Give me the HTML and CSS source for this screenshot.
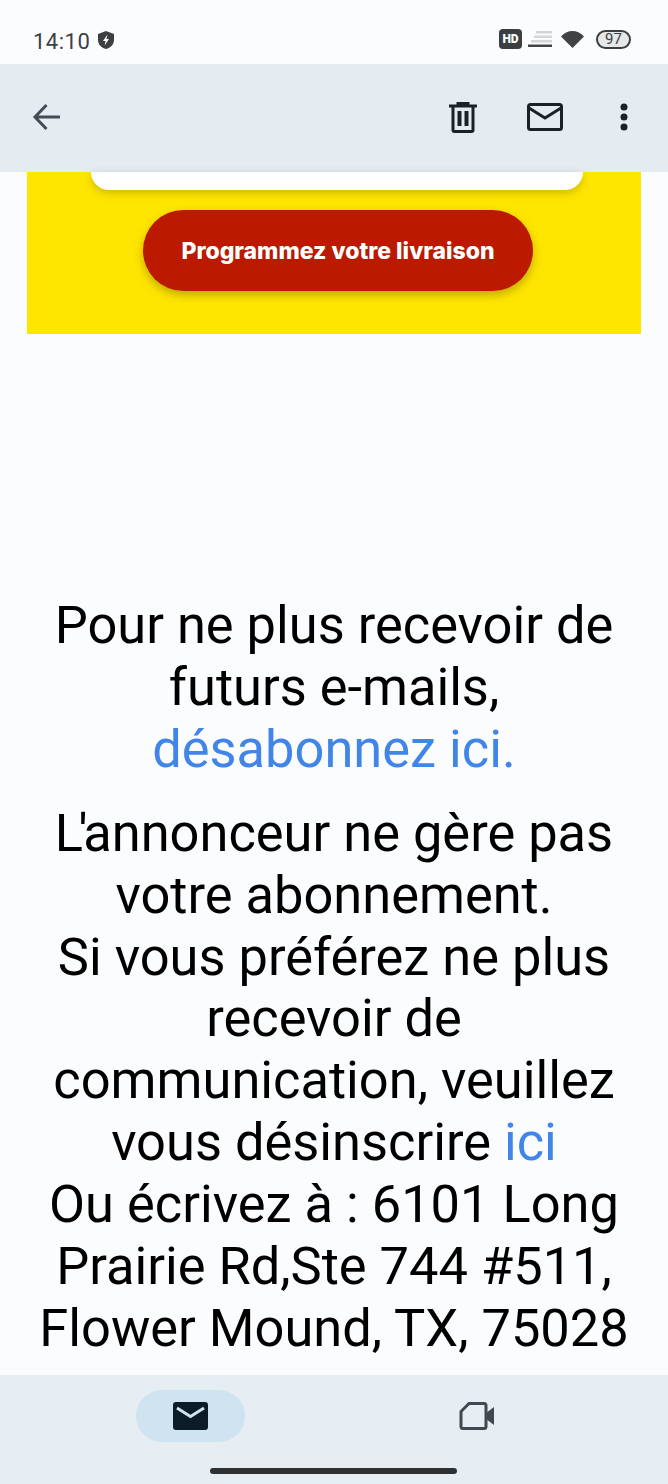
FILE: index.html
```html
<!DOCTYPE html>
<html lang="fr">
<head>
	<meta charset="UTF-8">
	<title>E-mail</title>
	<link rel="stylesheet" href="styles.css">
</head>
<body>
	<div class="phone">
		<div class="status">
			<div class="status-left">
				<span class="time">14:10</span>
				<svg class="shield" width="18" height="20" viewBox="0 0 18 20"><path d="M9 1l8 3v6c0 4.500-3.300 7.600-8 9-4.700-1.400-8-4.500-8-9V4z" fill="#3c4043"/><path d="M10.500 4.500L6 11h2.600l-1 4.500L12 9H9.400z" fill="#fff"/></svg>
			</div>
			<div class="status-right">
				<span class="hd">HD</span>
				<svg class="signal" width="24" height="16" viewBox="0 0 24 16"><path d="M8 0h16v2.500H8zM6 4.500h18V7H6zM3 9h21v2.500H3z" fill="#d4d6d8"/><path d="M0 13.500h24V16H0z" fill="#444"/></svg>
				<svg class="wifi" width="23" height="18" viewBox="0 0 23 18"><path d="M0 6.500C3 3 7.200 1 11.500 1S20 3 23 6.500L11.500 18z" fill="#404346"/></svg>
				<span class="battery">97</span>
			</div>
		</div>

		<div class="toolbar">
			<svg width="32" height="32" viewBox="0 0 32 32"><path d="M29 16H4M15.500 4L4 16l11.500 12" fill="none" stroke="#444b54" stroke-width="3"/></svg>
			<div class="toolbar-actions">
				<svg width="28" height="32" viewBox="0 0 28 32"><path d="M0 5h28M9 5V2.500h10V5M4 5v24a1.500 1.500 0 0 0 1.500 1.500h17a1.500 1.500 0 0 0 1.500-1.500V5" fill="none" stroke="#1a2228" stroke-width="3"/><path d="M10.500 10v15M17.500 10v15" fill="none" stroke="#1a2228" stroke-width="4"/></svg>
				<svg class="mail-outline" width="36" height="28" viewBox="0 0 36 28"><rect x="1.500" y="1.500" width="33" height="25" rx="2" fill="none" stroke="#1a2228" stroke-width="3"/><path d="M2 5l16 10L34 5" fill="none" stroke="#1a2228" stroke-width="3"/></svg>
				<svg class="dots" width="8" height="28" viewBox="0 0 8 28"><circle cx="4" cy="4" r="3.500" fill="#1a2228"/><circle cx="4" cy="14" r="3.500" fill="#1a2228"/><circle cx="4" cy="24" r="3.500" fill="#1a2228"/></svg>
			</div>
		</div>

		<div class="content">
			<div class="promo">
				<div class="promo-card"></div>
				<a class="promo-btn" href="#">Programmez votre livraison</a>
			</div>
			<div class="footer-text">
				<p>Pour ne plus recevoir de futurs e-mails, <a href="#">désabonnez ici.</a></p>
				<p><span class="kern">L'</span>annonceur ne gère pas votre abonnement.<br>Si vous préférez ne plus recevoir de communication, veuillez vous désinscrire <a href="#">ici</a><br>Ou écrivez à : 6101 Long Prairie Rd,Ste 744 #511, Flower Mound, TX, 75028</p>
			</div>
		</div>

		<div class="bottom-nav">
			<div class="tabs">
				<div class="tab tab-active">
					<svg width="36" height="28" viewBox="0 0 36 28"><rect x="1" width="35" height="28" rx="3" fill="#0b1c28"/><path d="M5 6l13.500 8.500L32 6" fill="none" stroke="#d0e4f0" stroke-width="3"/></svg>
				</div>
				<div class="tab">
					<svg width="36" height="28" viewBox="0 0 36 28"><path d="M10 1.500h15a2 2 0 0 1 2 2v21a2 2 0 0 1-2 2H4a2 2 0 0 1-2-2V9.500z" fill="none" stroke="#40474f" stroke-width="3"/><path d="M27 11l8-6v18l-8-6z" fill="#40474f"/></svg>
				</div>
			</div>
			<div class="home-bar"></div>
		</div>
	</div>
</body>
</html>
```

FILE: styles.css
```css
*{box-sizing: border-box;}
body,p{margin: 0;padding: 0;}
a{text-decoration: none;}
svg{display: block;flex: none;}
body{font-family: Roboto,"Noto Sans",sans-serif;background: #fbfcfe;}

.phone{width: 668px;height: 1484px;display: flex;flex-direction: column;overflow: hidden;}

.status{height: 64px;flex: none;display: flex;justify-content: space-between;align-items: center;padding: 18px 37px 0 33px;color: #3c4043;}
.status-left{display: flex;align-items: center;gap: 7px;}
.time{font-size: 22px;letter-spacing: .5px;}
.shield{margin-top: -3px;}
.status-right{display: flex;align-items: center;margin-top: -4px;}
.hd{width: 23px;height: 20px;border-radius: 4px;background: #3c3f42;color: #fff;font-size: 12px;font-weight: 900;line-height: 20px;text-align: center;}
.signal{margin-left: 6px;}
.wifi{margin-left: 9px;}
.battery{width: 35px;height: 19px;margin-left: 12px;border: 2px solid #3c3f42;border-radius: 10px;background: #e6e7e9;font-size: 15px;line-height: 15px;text-align: center;}

.toolbar{height: 108px;flex: none;background: #e4ecf1;display: flex;justify-content: space-between;align-items: center;padding: 0 40px 2px 31px;}
.toolbar-actions{display: flex;align-items: center;}
.mail-outline{margin-left: 50px;}
.dots{margin-left: 57px;}

.content{flex: 1;min-height: 0;}
.promo{margin: 0 27px;height: 162px;padding-left: 8px;background: #ffe600;display: flex;flex-direction: column;align-items: center;}
.promo-card{width: 492px;height: 18px;flex: none;margin-right: 2px;background: #fff;border-radius: 0 0 18px 18px;box-shadow: 0 3px 8px rgba(90,80,0,.3);}
.promo-btn{width: 390px;height: 81px;margin-top: 20px;border-radius: 41px;background: #bc1a00;color: #fff;font-family: Inter,Lato,sans-serif;font-size: 23px;font-weight: 800;line-height: 83px;text-align: center;box-shadow: 0 4px 10px rgba(90,80,0,.4);}

.footer-text{margin: 261px 27px 0;color: #000;font-size: 52.4px;line-height: 61.9px;text-align: center;}
.footer-text a{color: #4285e8;}
.footer-text p{margin-bottom: 22px;}
.kern{letter-spacing: -4.500px;}

.bottom-nav{height: 109px;flex: none;background: #e6eef3;display: flex;flex-direction: column;align-items: center;}
.tabs{width: 100%;display: flex;justify-content: center;gap: 178px;padding: 15px 1px 0 0;}
.tab{width: 109px;height: 52px;border-radius: 26px;display: flex;align-items: center;justify-content: center;}
.tab-active{background: #cfe4f0;}
.home-bar{width: 247px;height: 6px;margin: 26px 2px 0 0;border-radius: 3px;background: #2e3134;}
```
